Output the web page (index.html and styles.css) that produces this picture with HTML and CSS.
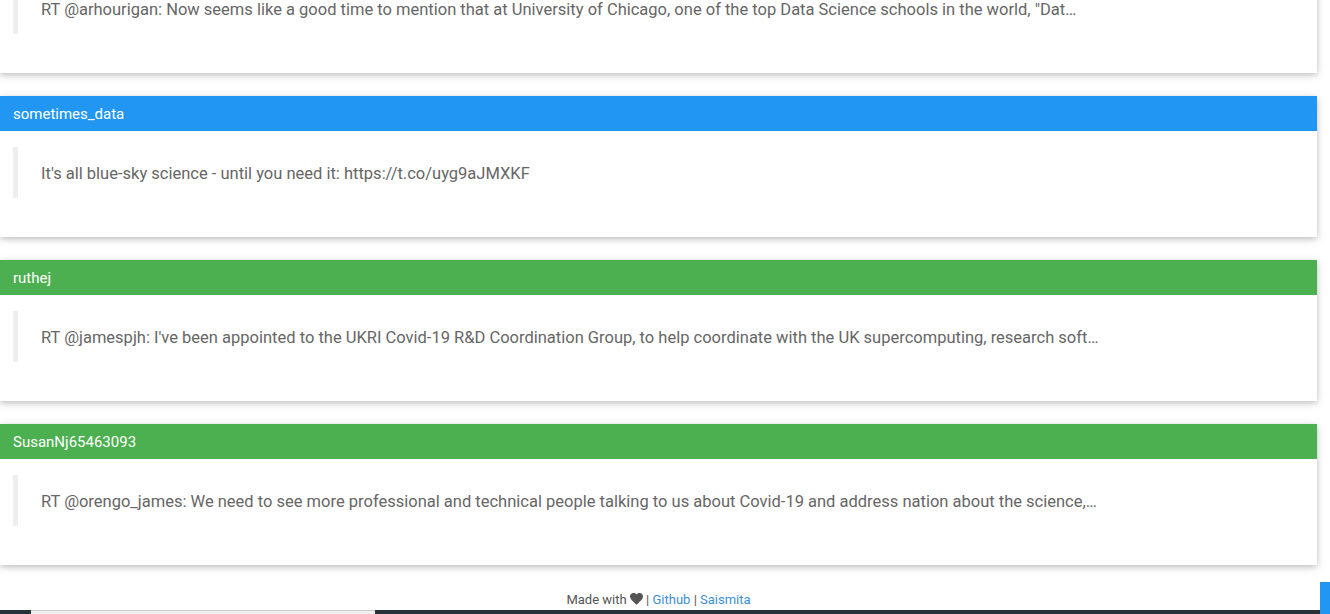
FILE: index.html
```html
<!DOCTYPE html>
<html lang="en">
<head>
<meta charset="utf-8">
<title>Tweets</title>
<link rel="stylesheet" href="styles.css">
</head>
<body>
<main class="feed">
  <section class="card">
    <header class="card-head head-blue">cfchicago</header>
    <div class="card-body">
      <blockquote class="tweet">RT @arhourigan: Now seems like a good time to mention that at University of Chicago, one of the top Data Science schools in the world, "Dat…</blockquote>
    </div>
  </section>
  <section class="card">
    <header class="card-head head-blue">sometimes_data</header>
    <div class="card-body">
      <blockquote class="tweet">It's all blue-sky science - until you need it: https://t.co/uyg9aJMXKF</blockquote>
    </div>
  </section>
  <section class="card">
    <header class="card-head head-green">ruthej</header>
    <div class="card-body">
      <blockquote class="tweet">RT @jamespjh: I've been appointed to the UKRI Covid-19 R&amp;D Coordination Group, to help coordinate with the UK supercomputing, research soft…</blockquote>
    </div>
  </section>
  <section class="card">
    <header class="card-head head-green">SusanNj65463093</header>
    <div class="card-body">
      <blockquote class="tweet">RT @orengo_james: We need to see more professional and technical people talking to us about Covid-19 and address nation about the science,…</blockquote>
    </div>
  </section>
  <footer class="footer">Made with <svg class="heart" viewBox="0 0 24 22" width="13" height="12"><path d="M12 21.5 10.3 20C4.2 14.5 0 10.8 0 6.3 0 2.7 2.8 0 6.4 0c2.1 0 4.1 1 5.6 2.5C13.5 1 15.5 0 17.6 0 21.2 0 24 2.7 24 6.3c0 4.5-4.2 8.2-10.3 13.7L12 21.5z" fill="#555"/></svg> | <a href="#">Github</a> | <a href="#">Saismita</a></footer>
</main>
<div class="bottom-strip"><span class="strip-light"></span></div>
<div class="side-tab"></div>
</body>
</html>
```
FILE: styles.css
```css
html, body {
  margin: 0;
  padding: 0;
  background: #fff;
  font-family: Roboto, "Noto Sans", "Liberation Sans", sans-serif;
  overflow: hidden;
}

.feed {
  width: 1317px;
  margin-top: -68px;
}

.card {
  background: #fff;
  box-shadow: 0 2px 5px 0 rgba(0,0,0,0.16), 0 2px 10px 0 rgba(0,0,0,0.12);
  margin-bottom: 23px;
}

.card-head {
  height: 35px;
  padding: 0 13px;
  display: flex;
  align-items: center;
  color: #fff;
  font-size: 15px;
}

.head-blue { background: #2196F3; }
.head-green { background: #4CAF50; }

.card-body {
  padding: 16px 13px 39px;
}

.tweet {
  margin: 0;
  border-left: 5px solid #eeeeee;
  padding: 14px 23px 12px;
  line-height: 25px;
  font-size: 16.5px;
  color: #666;
}

.footer {
  text-align: center;
  font-size: 13px;
  line-height: 15px;
  color: #555;
  padding-top: 4px;
}

.footer a {
  color: #3c8fd6;
  text-decoration: none;
}

.heart {
  vertical-align: -1px;
}

.bottom-strip {
  position: fixed;
  left: 0;
  right: 0;
  bottom: 0;
  height: 4px;
  background: #263238;
}

.strip-light {
  position: absolute;
  left: 31px;
  top: 0;
  width: 344px;
  height: 3px;
  background: #eeeeee;
  border-top: 1px solid #cccccc;
}

.side-tab {
  position: fixed;
  right: 0;
  bottom: 0;
  width: 10px;
  height: 32px;
  background: #2196F3;
}
```
